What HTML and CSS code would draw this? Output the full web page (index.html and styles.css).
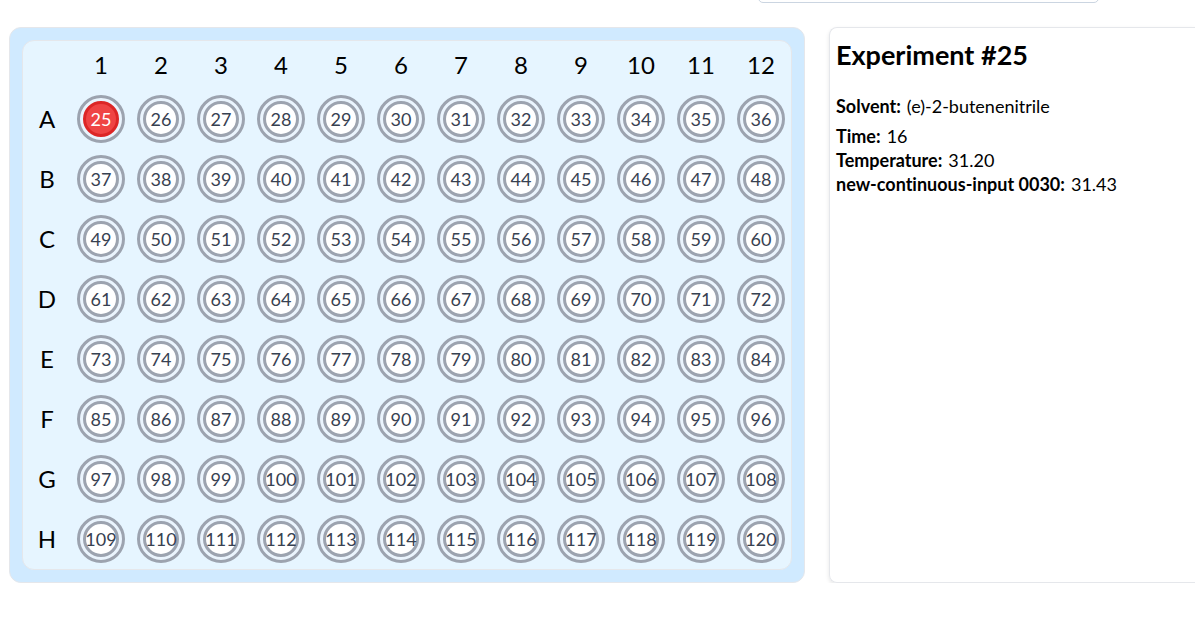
FILE: index.html
```html
<!DOCTYPE html>
<html lang="en">
<head>
<meta charset="utf-8">
<title>Experiment plate</title>
<link rel="stylesheet" href="styles.css">
</head>
<body>
<header class="toolbar"><input class="toolbar-input" type="text" aria-label="Search"></header>
<main class="layout">
  <section class="tray" aria-label="Well plate">
    <table class="plate">
      <thead><tr id="columns"><td class="corner"></td></tr></thead>
      <tbody id="rows"></tbody>
    </table>
  </section>
  <section class="details">
    <h1 class="title">Experiment #25</h1>
    <dl class="facts">
      <div class="fact fact-lead"><dt>Solvent:</dt><dd>(e)-2-butenenitrile</dd></div>
      <div class="fact"><dt>Time:</dt><dd>16</dd></div>
      <div class="fact"><dt>Temperature:</dt><dd>31.20</dd></div>
      <div class="fact"><dt>new-continuous-input 0030:</dt><dd>31.43</dd></div>
    </dl>
  </section>
</main>
<script src="plate.js"></script>
</body>
</html>
```
FILE: styles.css
```css
* { box-sizing: border-box; }
body {
  margin: 0;
  background: #fff;
  color: #000;
  font-family: Lato, "Liberation Sans", sans-serif;
  font-size: 18px;
  line-height: 24px;
  font-variant-ligatures: none;
}
.toolbar {
  display: flex;
  justify-content: flex-end;
  align-items: flex-end;
  height: 27px;
  padding: 0 96px 24px 0;
  overflow: hidden;
}
.toolbar-input {
  flex: none;
  width: 341px;
  height: 40px;
  border: 1px solid #cbd5e1;
  border-radius: 5px;
  background: #fff;
}
.layout {
  display: flex;
  gap: 24px;
  padding-left: 9px;
}
.tray {
  flex: none;
  padding: 12px;
  border: 1px solid #e5e7eb;
  border-radius: 12px;
  background: #d0eaff;
}
.plate {
  display: block;
  border: 1px solid #e5e7eb;
  border-radius: 12px;
  background: #e6f5ff;
  border-spacing: 0;
}
.plate th, .plate td {
  width: 60px;
  height: 60px;
  min-width: 60px;
  padding: 0;
  text-align: center;
  font-size: 24px;
  font-weight: 400;
}
.plate thead th, .plate thead td { height: 48px; }
.plate tbody th, .plate .corner { width: 48px; min-width: 48px; }
.well {
  display: block;
  width: 48px;
  height: 48px;
  margin: 0 auto;
  padding: 3px;
  border: 3px solid #9ca3af;
  border-radius: 50%;
  background: #eaf4fd;
  color: #374151;
  font: inherit;
  font-size: 18px;
  line-height: 30px;
  cursor: pointer;
}
.well-core {
  display: flex;
  justify-content: center;
  align-items: center;
  height: 36px;
  border: 3px solid #9ca3af;
  border-radius: 50%;
  background: #fff;
}
.well-selected { color: #fff; }
.well-selected .well-core { border-color: #dc2626; background: #ef4444; }
.details {
  flex: 1;
  min-width: 0;
  padding: 12px 6px;
  border: 1px solid #e5e7eb;
  border-right: 0;
  border-radius: 8px 0 0 8px;
  box-shadow: 0 2px 4px #0000001a;
}
.title {
  margin: 0 0 24px;
  font-size: 27px;
  line-height: 30px;
  font-weight: 700;
}
.facts { margin: 0; }
.fact { display: flex; gap: 6px; }
.fact-lead { margin-bottom: 6px; }
.fact dt { font-weight: 700; }
.fact dd { margin: 0; }
```
FILE: plate.js
```js
const columns = 12;
const firstNumber = 25;
const selected = 25;
const head = document.getElementById('columns');
const body = document.getElementById('rows');

for (let c = 1; c <= columns; c++) {
  const th = document.createElement('th');
  th.scope = 'col';
  th.textContent = c;
  head.append(th);
}

[...'ABCDEFGH'].forEach((letter, r) => {
  const row = document.createElement('tr');
  const th = document.createElement('th');
  th.scope = 'row';
  th.textContent = letter;
  row.append(th);
  for (let c = 0; c < columns; c++) {
    const number = firstNumber + r * columns + c;
    const cell = document.createElement('td');
    const well = document.createElement('button');
    const core = document.createElement('span');
    well.type = 'button';
    well.className = number === selected ? 'well well-selected' : 'well';
    core.className = 'well-core';
    core.textContent = number;
    well.append(core);
    cell.append(well);
    row.append(cell);
  }
  body.append(row);
});
```
